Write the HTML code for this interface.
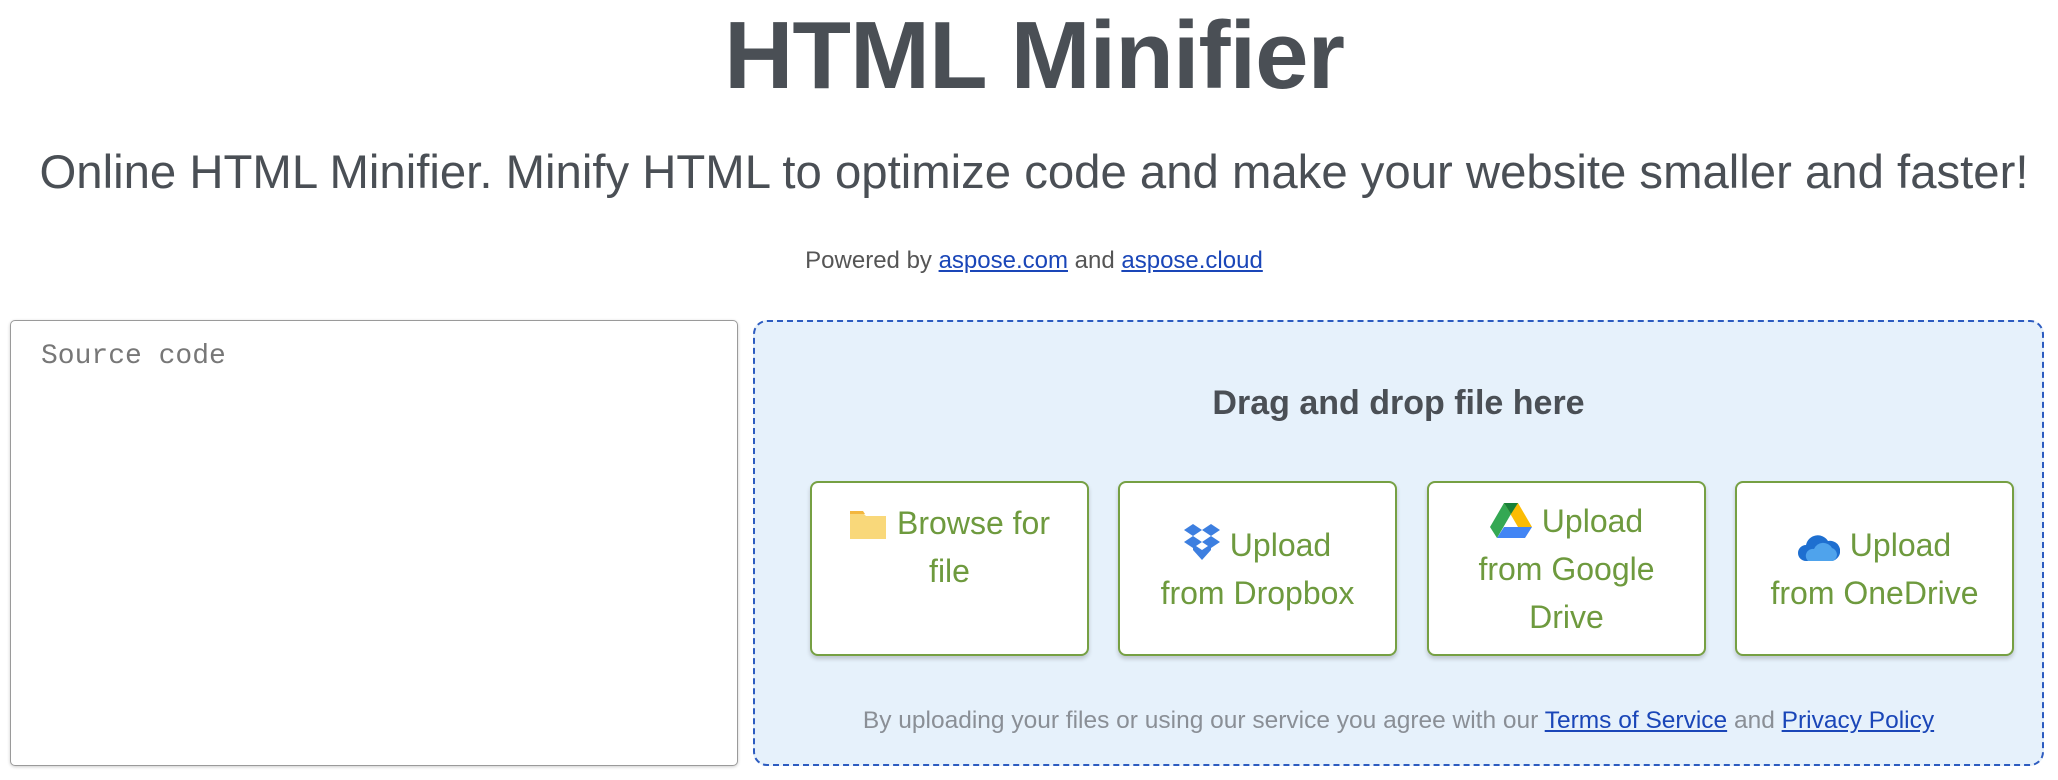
<!DOCTYPE html>
<html><head><meta charset="utf-8"><style>
*{box-sizing:border-box;margin:0;padding:0}
body{width:2058px;height:780px;background:#fff;font-family:"Liberation Sans",Arial,sans-serif;color:#4a4f55;position:relative;overflow:hidden}
h1{position:absolute;top:4px;left:0;width:2068px;text-align:center;font-size:96px;font-weight:bold;line-height:104px;letter-spacing:-1px}
.sub{position:absolute;top:145px;left:0;width:2068px;text-align:center;font-size:47.3px;line-height:56px;white-space:nowrap}
.pw{position:absolute;top:246px;left:0;width:2068px;text-align:center;font-size:24px;line-height:30px;color:#555}
a{color:#1a46b8;text-decoration:underline}
.ta{position:absolute;left:10px;top:320px;width:728px;height:446px;border:1.5px solid #9a9a9a;border-radius:5px;box-shadow:0 1px 3px rgba(0,0,0,.2)}
.ta span{position:absolute;left:30px;top:20px;font-family:"Liberation Mono",monospace;font-size:28px;color:#777}
.dz{position:absolute;left:753px;top:320px;width:1291px;height:446px;border:2px dashed #2d5cc0;border-radius:14px;background:#e6f1fb}
.dd{position:absolute;top:383px;left:753px;width:1291px;text-align:center;font-size:34px;font-weight:bold;line-height:40px}
.b{position:absolute;top:481px;width:279px;height:175px;background:#fff;border:2px solid #76a043;border-radius:8px;box-shadow:0 3px 4px rgba(0,0,0,.18);color:#6e9a3e;font-size:32px;line-height:48px;text-align:center;display:flex;flex-direction:column;justify-content:center}
.b svg{vertical-align:-6px;margin-right:10px}
.ft{position:absolute;top:706px;left:753px;width:1291px;text-align:center;font-size:24.5px;color:#8a8f96;line-height:30px}
</style></head><body>
<h1>HTML Minifier</h1>
<div class="sub">Online HTML Minifier. Minify HTML to optimize code and make your website smaller and faster!</div>
<div class="pw">Powered by <a>aspose.com</a> and <a>aspose.cloud</a></div>
<div class="ta"><span>Source code</span></div>
<div class="dz"></div>
<div class="dd">Drag and drop file here</div>
<div class="b" style="left:810px;justify-content:flex-start;padding-top:16px"><div><svg width="38" height="30" viewBox="0 0 38 30"><path d="M1 3h13l3 3h20v23H1z" fill="#f9d87a"/><path d="M1 1h13l2 3H1z" fill="#f3b73f"/></svg>Browse for</div><div>file</div></div>
<div class="b" style="left:1118px"><div><svg width="36" height="40" viewBox="0 0 36 40"><g fill="#3d7fe0"><path d="M9 2l9 6-9 6-9-6z"/><path d="M27 2l9 6-9 6-9-6z"/><path d="M9 14l9 6-9 6-9-6z"/><path d="M27 14l9 6-9 6-9-6z"/><path d="M18 28l9-6 0 6-9 10-9-10 0-6z"/></g></svg>Upload</div><div>from Dropbox</div></div>
<div class="b" style="left:1427px"><div><svg width="42" height="36" viewBox="0 0 42 36"><path d="M14 1h14l14 24H28z" fill="#fbbc04"/><path d="M14 1L0 25l7 11L21 12z" fill="#34a853"/><path d="M7 36h28l7-11H14z" fill="#4285f4"/><path d="M14 1h14L21 12z" fill="#188038"/></svg>Upload</div><div>from Google</div><div>Drive</div></div>
<div class="b" style="left:1735px"><div><svg width="42" height="30" viewBox="0 0 42 30"><path d="M8 29a8 8 0 0 1 0-16 12 12 0 0 1 22-4 9 9 0 0 1 4 20z" fill="#1e6fd0"/><path d="M10 29a7 7 0 0 1 6-12 10 10 0 0 1 18-1 7 7 0 0 1 1 13z" fill="#4fa3ec"/></svg>Upload</div><div>from OneDrive</div></div>
<div class="ft">By uploading your files or using our service you agree with our <a>Terms of Service</a> and <a>Privacy Policy</a></div>
</body></html>
